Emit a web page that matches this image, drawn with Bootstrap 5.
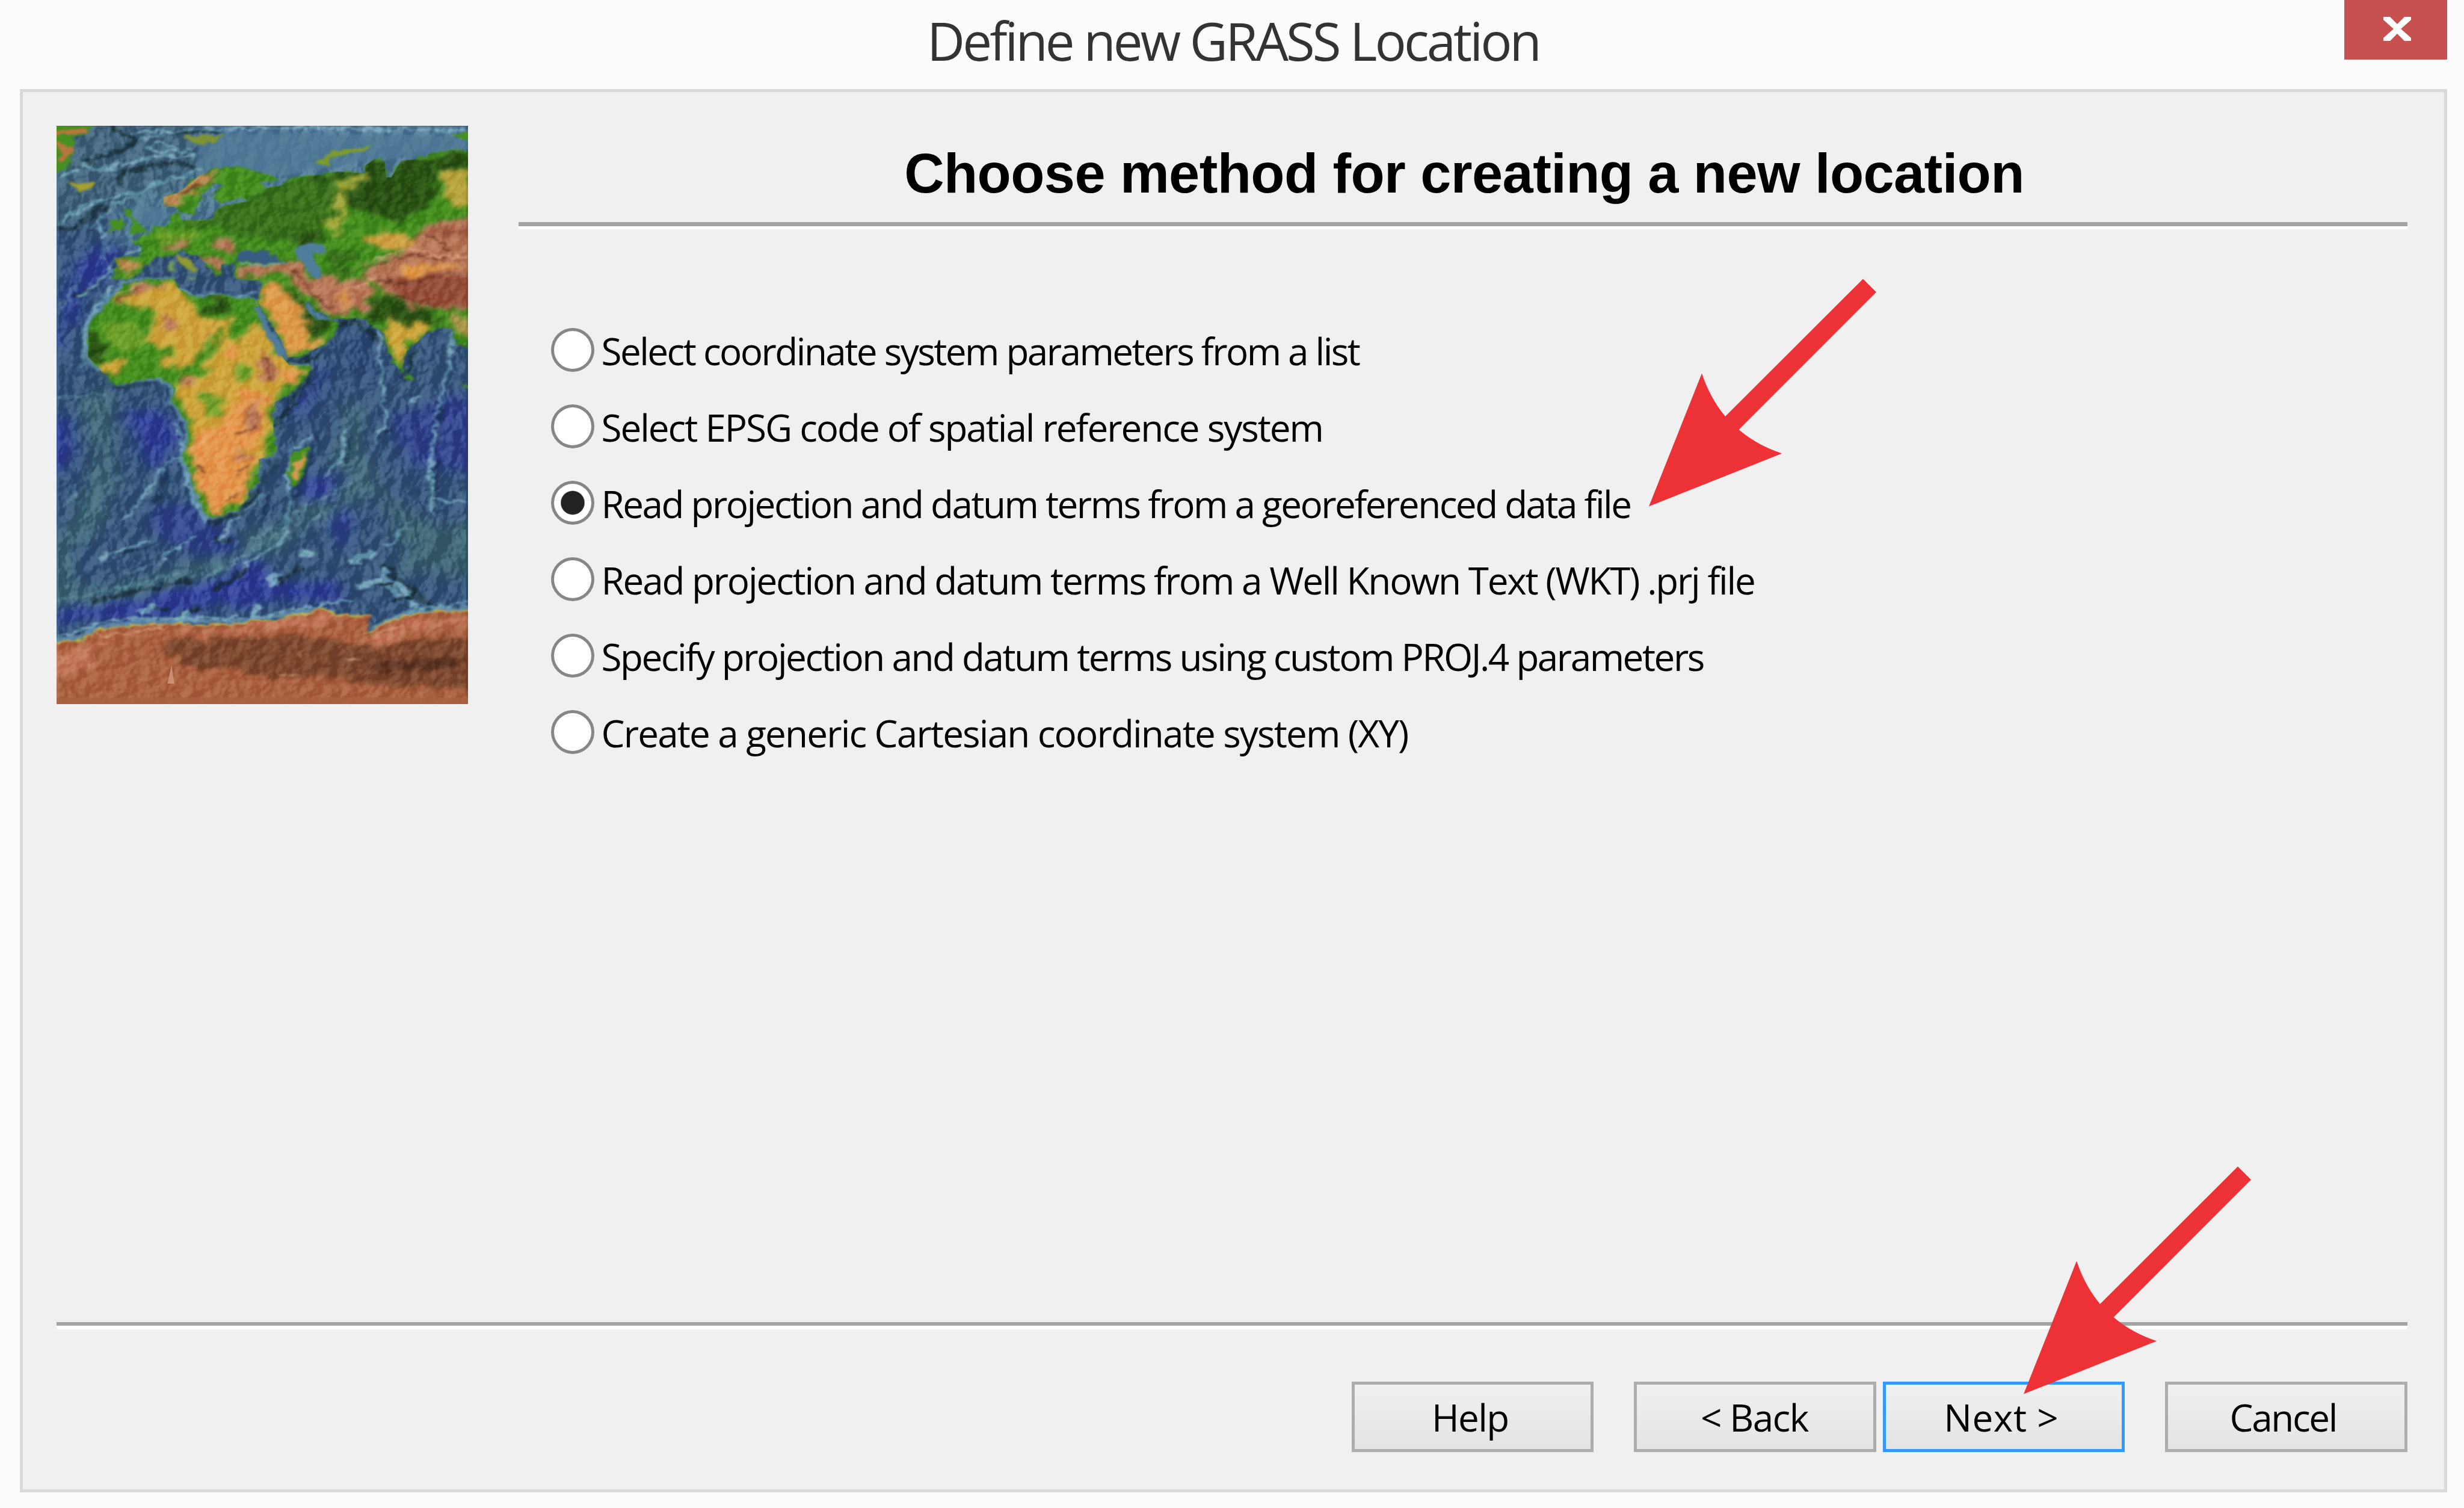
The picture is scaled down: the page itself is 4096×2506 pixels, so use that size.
<!DOCTYPE html>
<html lang="en">
<head>
<meta charset="utf-8">
<title>Define new GRASS Location</title>
<link href="https://cdn.jsdelivr.net/npm/bootstrap@5.3.0/dist/css/bootstrap.min.css" rel="stylesheet">
<style>
body{width:4096px;height:2506px;background:#fcfcfc;overflow:hidden;font-family:"Open Sans","Noto Sans",sans-serif;color:#000}
.titlebar{height:148px}
.win-title{font-size:87px;line-height:134px;letter-spacing:-3.95px;color:#333;padding-left:4px}
.bar-side{width:199px}
.close-btn{width:171px;height:99px;background:#c75050;margin-right:28px}
.close-btn svg{width:46px;height:40px;margin-left:4px;margin-top:-4px}
.panel{height:2331.5px;margin:0 28px 0 33px;border:5.6px solid #d9d9d9;background:#f0f0f0;padding:56px 61.5px 62px 55.5px}
.relief{width:684px;height:961px;display:block}
.relief filter{color-interpolation-filters:sRGB}
.method{width:3140px}
.method h1{font:bold 92px/159.5px "Liberation Sans",Arial,sans-serif;letter-spacing:-.6px;margin:0;padding-left:5px}
.etched{height:12px;background:linear-gradient(#a3a3a3 0 6.5px,#fff 6.5px)}
.options{margin-top:137.5px;padding-left:54px}
.option{height:127px;gap:12px;font-size:62px;line-height:127px}
.option span{padding-top:3px}
.option .form-check-input{width:72px;height:73px;border:5px solid #868686;background:#fff;box-shadow:none;margin:0}
.option .form-check-input:checked{background:radial-gradient(circle,#222 0 19px,#fff 20.5px)}
.option:nth-child(1){letter-spacing:-2.54px}
.option:nth-child(2){letter-spacing:-2.04px}
.option:nth-child(3){letter-spacing:-2.52px}
.option:nth-child(4){letter-spacing:-2.21px}
.option:nth-child(5){letter-spacing:-2.48px}
.option:nth-child(6){letter-spacing:-1.84px}
.actions{margin-top:87px}
.wiz{width:402.5px;height:117px;border:5.6px solid #adadad;border-radius:0;padding:1px 8px 0 0;background:linear-gradient(#f0f0f0,#e4e4e4);font-size:62px;line-height:107px;color:#000;letter-spacing:-1.6px}
.wiz-back{letter-spacing:-1.6px;padding-right:2px}
.wiz-default{border-color:#3399ff;letter-spacing:.6px}
.wiz-cancel{letter-spacing:-2.4px;padding-right:10px}
.pointer{position:absolute;width:380px;height:380px;fill:#ed3237}
.pointer-option{left:2740px;top:462px}
.pointer-next{left:3362.5px;top:1937.2px}
</style>
</head>
<body class="d-flex flex-column position-relative">
<header class="titlebar d-flex align-items-start flex-shrink-0">
  <div class="bar-side"></div>
  <div class="win-title flex-fill text-center">Define new GRASS Location</div>
  <div class="close-btn d-flex align-items-center justify-content-center">
    <svg viewBox="0 0 46 40"><path d="M0 0H11L23 12 35 0H46V5L29 20 46 35V40H35L23 28 11 40H0V35L17 20 0 5Z" fill="#fff"/></svg>
  </div>
</header>
<main class="panel d-flex flex-column flex-shrink-0">
  <div class="d-flex justify-content-between">
    <svg class="relief" viewBox="44 65 1488 2965" preserveAspectRatio="none">
      <defs>
        <filter id="rough" x="-5%" y="-5%" width="110%" height="110%"><feTurbulence type="fractalNoise" baseFrequency=".035 .03" numOctaves="3" seed="4" result="n"/><feDisplacementMap in="SourceGraphic" in2="n" scale="34" xChannelSelector="R" yChannelSelector="G"/><feGaussianBlur stdDeviation="4.5"/></filter>
        <filter id="soft" x="-20%" y="-20%" width="140%" height="140%"><feTurbulence type="fractalNoise" baseFrequency=".02" numOctaves="3" seed="9" result="n"/><feDisplacementMap in="SourceGraphic" in2="n" scale="90" xChannelSelector="R" yChannelSelector="G"/><feGaussianBlur stdDeviation="10"/></filter>
        <filter id="haze" x="-30%" y="-30%" width="160%" height="160%"><feTurbulence type="fractalNoise" baseFrequency=".01" numOctaves="4" seed="2" result="n"/><feDisplacementMap in="SourceGraphic" in2="n" scale="130" xChannelSelector="R" yChannelSelector="G"/><feGaussianBlur stdDeviation="28"/></filter>
        <filter id="ridge" x="-20%" y="-20%" width="140%" height="140%"><feTurbulence type="fractalNoise" baseFrequency=".025" numOctaves="3" seed="12" result="n"/><feDisplacementMap in="SourceGraphic" in2="n" scale="50" xChannelSelector="R" yChannelSelector="G"/><feGaussianBlur stdDeviation="5"/></filter>
        <filter id="bumps" x="0" y="0" width="100%" height="100%"><feTurbulence type="fractalNoise" baseFrequency=".016 .009" numOctaves="4" seed="21"/><feColorMatrix values="0 0 0 0 0 0 0 0 0 0 0 0 0 0 0 1 0 0 0 0"/><feGaussianBlur stdDeviation="3"/><feDiffuseLighting surfaceScale="60" diffuseConstant="1" lighting-color="#fff"><feDistantLight azimuth="215" elevation="32"/></feDiffuseLighting></filter>
        <filter id="landbumps" x="0" y="0" width="100%" height="100%"><feTurbulence type="fractalNoise" baseFrequency=".022 .018" numOctaves="3" seed="5"/><feColorMatrix values="0 0 0 0 0 0 0 0 0 0 0 0 0 0 0 1 0 0 0 0"/><feGaussianBlur stdDeviation="3"/><feDiffuseLighting surfaceScale="30" diffuseConstant="1" lighting-color="#fff"><feDistantLight azimuth="215" elevation="32"/></feDiffuseLighting></filter>
        <path id="africa" d="M290 870L390 852 470 850 480 890 500 920 560 950 600 930 640 930 690 955 740 945 770 965 790 1070 830 1180 860 1250 885 1292 965 1290 950 1350 890 1440 835 1480 825 1560 830 1640 840 1720 820 1755 775 1775 777 1890 742 1930 735 1980 690 2040 640 2065 590 2070 565 2000 540 1930 530 1850 502 1780 510 1720 528 1650 515 1590 490 1530 465 1480 475 1410 430 1365 370 1360 320 1385 260 1395 215 1340 180 1280 158 1250 160 1110 170 1060 215 1000 245 950Z"/>
        <path id="eurasia" d="M1540 185L1480 190 1400 205 1350 235 1290 245 1255 330 1235 330 1230 245 1195 235 1160 270 1160 310 1060 300 950 325 890 330 860 370 800 385 780 350 840 340 820 315 740 290 690 275 620 285 560 320 510 380 490 405 430 430 430 480 470 480 500 515 530 525 560 480 570 420 620 360 655 370 615 400 610 440 640 460 720 430 742 452 650 475 620 500 610 545 560 555 510 550 480 510 458 515 460 560 410 580 370 620 315 660 350 690 345 735 258 740 250 850 300 855 345 820 370 770 405 735 440 740 500 705 560 740 600 790 620 845 640 820 640 775 690 765 690 800 690 850 780 855 790 870 770 960 800 1040 850 1150 880 1255 940 1240 1020 1180 1060 1110 1070 1080 1030 1060 980 1060 945 1000 940 960 990 1020 1040 1050 1160 1052 1185 1100 1230 1130 1240 1210 1290 1340 1310 1220 1390 1120 1430 1100 1465 1105 1490 1180 1540 1215Z"/>
        <path id="antarctica" d="M30 2720L140 2705 200 2650 300 2635 420 2620 560 2630 690 2625 770 2605 830 2610 900 2575 960 2570 1000 2540 1050 2575 1180 2580 1160 2675 1230 2620 1320 2580 1400 2560 1540 2555V3040H30Z"/>
        <clipPath id="landclip"><use href="#africa"/><use href="#eurasia"/><use href="#antarctica"/></clipPath>
      </defs>
      <rect x="44" y="65" width="1488" height="2965" fill="#37577d"/>
      <g filter="url(#haze)">
        <path d="M0 30H600L560 300 300 500 0 600Z" fill="#43677f"/>
        <path d="M560 40H1600V400H900L560 560 380 700 230 640 280 470 560 300Z" fill="#517b98"/>
        <g fill="#31409a">
          <path d="M60 900L180 650 300 700 180 900 90 1100 50 1250Z"/><path d="M300 1500L440 1550 480 1700 440 1830 380 1850 310 1700Z"/><path d="M880 1480L1000 1280 1060 1350 950 1550 900 1600Z" fill="#33498b"/><path d="M1260 1550L1500 1450 1600 1500V1900L1440 1850 1280 1750Z" fill="#334590"/>
          <path d="M350 2050L520 1980 700 2200 640 2300 450 2200Z" fill="#334690"/><path d="M60 2560L300 2450 560 2400 760 2280 850 2400 1080 2400 1050 2500 700 2520 400 2580 60 2620Z"/>
          <path d="M930 1900L1050 1850 1120 2130 1080 2250 1000 2100Z"/><path d="M0 1560L100 1560 90 1830 0 1850Z"/>
        </g>
        <path d="M190 1450L220 1800 150 2100 60 2200 60 2500 300 2450 600 2350 850 2150 1150 1920 1100 1700 1130 1500" fill="none" stroke="#426c7a" stroke-width="85"/>
        <path d="M1280 2100H1600V2350H1300ZM1180 1900L1230 1900 1330 2100 1280 2120Z" fill="#3e6574"/>
        <path d="M1080 1100L1180 1120 1220 1380 1100 1350Z" fill="#33507c"/>
      </g>
      <g filter="url(#ridge)" fill="none" stroke-linejoin="round" stroke-linecap="round">
        <g stroke="#1c3440" stroke-width="24" opacity=".75">
          <path d="M250 75L330 140 290 190 180 225 130 280M470 95H620M300 300L420 255 540 270M270 370L280 300M60 590L120 590 200 480 230 500M120 940L200 870M880 1295L990 1240M1060 1090L1120 1060 1220 1180M1310 1360L1340 1220"/>
          <path d="M600 2100L700 2050 770 1940M660 2200L620 2180M850 2410L920 2330M1230 2320L1390 2520M390 2540H440M500 2570L560 2540M180 2500L520 2400M730 2340L620 2440M840 1600L960 1330"/>
        </g>
        <g stroke="#20395a" stroke-width="14" opacity=".6"><path d="M400 1990L455 1820M1440 1520L1418 1750 1418 2000M985 1650L960 1800 920 1900 905 2100 890 2170M1250 1590L1215 1690M800 1970L790 2080M1100 1640L1090 1780M170 910L260 770M270 2260L380 2220M600 2330L560 2400"/></g>
        <g stroke="#7fb3c6" stroke-width="13" opacity=".75">
          <path d="M330 100L600 85 900 75 1530 90M140 270L210 290 400 225 540 220M60 560L210 440 350 400 560 290M70 540L140 470M190 560L210 640M370 180L440 200 520 190M170 590L240 490 420 350M130 940L240 800M250 760L240 840 M340 690L300 730M250 880L150 1080 145 1300M1210 1080L1230 1560M1480 1120L1430 1500M1320 1480L1350 1450M500 910L560 950M690 960L770 910M360 130L430 110M410 150L470 180M60 320L120 300"/>
          <path d="M290 2080L380 1930 440 1800 500 1760M480 1600L520 1900 580 2100M640 2200L680 2080 790 1960M970 1640L890 1750 880 1900 890 2000 870 2180 720 2330M1080 1620L1080 1780 1010 1850M1240 1560L1200 1680M1425 1500L1400 1740 1400 2060M1400 1985L1530 1990M1310 2100L1240 2230M200 2280L380 2190M430 2280L540 2170M60 2680L240 2600 480 2590 760 2590 900 2540 1100 2500M1200 2640L1320 2560 1530 2500"/>
        </g>
        <g stroke="#6a9bab" stroke-width="12" opacity=".5"><path d="M600 2370L740 2250 880 2120M60 2500L260 2440 480 2360M70 2010L150 1920M300 2360L420 2300 460 2240M740 2200L880 2080 1010 1970 1120 1880M560 2400L700 2310M60 1460L220 1440M950 2110L1010 2050M60 1000L130 850M200 740L230 680"/></g>
        <g stroke="#7fb3c6" stroke-width="30" opacity=".8"><path d="M1110 2295L1180 2260M1140 2430L1220 2390M1220 2400L1300 2430 1340 2530M1220 2350L1270 2470M355 2560L390 2525M490 2600L520 2560M815 2415L850 2365M940 2255L950 2265M755 2570L770 2530"/></g>
        <path d="M1200 2430L1260 2420M1280 2500L1330 2480" stroke="#1c3440" stroke-width="14"/>
      </g>
      <rect x="44" y="65" width="1488" height="2965" filter="url(#bumps)" style="mix-blend-mode:soft-light" opacity=".3"/>
      <path filter="url(#rough)" d="M560 110L900 100 1530 120V200L1200 240 850 320 560 280ZM420 490L340 480 330 560 400 590 460 520Z" fill="#517b98" opacity=".7"/>
      <g filter="url(#rough)">
        <g fill="none" stroke="#78abc0" stroke-width="20" opacity=".6"><use href="#africa" x="-8"/><path d="M30 2705L140 2685 200 2630 420 2600 700 2605 960 2550 1050 2555M1180 2640L1320 2560 1540 2535"/></g>
        <path d="M850 1480L965 1330M190 1320L260 1410 380 1385M740 1960L700 2060 620 2090M790 1900L850 1770" fill="none" stroke="#203c50" stroke-width="20" opacity=".6"/>
        <g fill="#45901f"><use href="#africa"/><use href="#eurasia"/>
          <path d="M30 50H190L150 100 100 130 110 180 90 230 80 290 30 310Z"/><path d="M90 365L180 352 182 380 130 400Z" fill="#a5a02e"/><path d="M500 120L660 110 610 150 560 165Z" fill="#7e9334"/>
          <path d="M980 260L1010 220 1060 190 1180 168 1175 190 1080 210 1030 240 1030 270Z" fill="#7f9d2b"/><path d="M1470 100L1550 100V140L1500 130Z"/>
          <path d="M285 485L320 500 320 540 370 605 310 615 320 570Z"/><path d="M240 560L280 540 290 590 235 605Z"/>
          <path d="M470 725L510 735 555 800 545 830 500 780Z" fill="#8f9a33"/><path d="M450 760H465V810H450ZM510 835H540V850Z" fill="#739b58"/>
          <path d="M950 1700L958 1740 940 1830 920 1900 890 1910 882 1850 892 1760Z" fill="#45901f"/><path d="M945 1730L948 1760 930 1830 912 1890 898 1880 898 1800 925 1780Z" fill="#d09a50"/>
          <path d="M1320 1335L1335 1360 1320 1380 1305 1350ZM1500 1385L1550 1400V1430Z"/>
          <path d="M30 100L110 95 150 85M44 140L70 190 90 185 60 240" fill="none" stroke="#b9763e" stroke-width="26"/>
        </g>
        <use href="#antarctica" fill="#c9ba50" y="-8"/><use href="#antarctica" fill="#ad6341"/>
      </g>
      <g clip-path="url(#landclip)">
        <g filter="url(#soft)">
          <g fill="#2b5315"><path d="M1120 300L1200 240 1400 230 1540 190V270L1420 290 1410 420 1380 480 1300 560 1180 520 1080 460 1110 380Z"/><path d="M900 590L990 590 1010 660 930 690 890 670Z"/><path d="M590 940L680 950 670 1010 590 1040Z"/><path d="M150 1100L215 1180 210 1270 160 1280Z"/><path d="M1170 980L1240 920 1400 1030 1450 1080 1380 1100 1230 1060 1190 1090Z"/><path d="M870 880L1000 1030 1030 1110 990 1160 930 1080Z"/><path d="M410 900L460 900 460 960 410 960Z"/><path d="M940 310L1140 300 1130 340 960 350Z"/></g>
          <g fill="#3a731d"><path d="M620 480L880 350 1060 340 1050 560 880 660 700 640 620 580 480 580Z"/><path d="M1030 700L1130 700 1100 820 1030 830Z"/></g>
          <g fill="#d0a63c">
            <path d="M240 940L390 870 480 870 520 960 570 1040 620 1060 690 1050 680 1180 770 1050 860 1250 950 1310 850 1420 810 1500 815 1600 800 1740 740 1850 720 2000 640 2050 590 2050 550 1900 520 1750 540 1650 520 1560 480 1450 490 1350 560 1350 620 1230 640 1080 570 1230 480 1320 430 1290 460 1200 370 1180 380 1080 400 1010 340 1000Z"/>
            <path d="M200 1270L290 1260 270 1350 220 1330Z"/><path d="M790 870L860 880 930 1010 960 1150 1030 1170 880 1250 850 1130 780 970Z" fill="#df9c4b"/>
            <path d="M260 745L350 760 330 840 270 800Z" fill="#c48c51"/><path d="M430 430L560 320 640 285 600 350 510 430 440 470Z" fill="#bd8b54"/>
            <path d="M1430 285H1540V480L1460 460Z" fill="#b9a43e"/><path d="M1050 480L1055 370 1150 305 1165 335 1090 385 1085 450 1080 560 1060 640 1030 580Z" fill="#a3a83c"/>
            <path d="M1150 640L1260 610 1370 640 1350 700 1230 700Z" fill="#cfa144"/><path d="M1240 1010L1280 1090 1390 1080 1350 1170 1310 1180 1285 1310 1240 1180Z"/><path d="M1470 1050L1540 1020V1170L1490 1140Z" fill="#b09b50"/>
          </g>
          <g fill="#e5984d"><path d="M540 1650L640 1600 720 1420 800 1430 790 1640 740 1750 750 1800 720 1980 620 2060 560 1960 525 1760Z"/><path d="M640 1240L690 1150 700 1260ZM850 1340L950 1310 900 1390Z"/></g>
          <g fill="#b9785a"><path d="M690 790L850 765 930 780 960 850 1040 830 1080 860 1190 850 1170 960 1180 1000 1050 1040 970 980 900 850 830 825 700 855Z"/><path d="M1150 810L1210 760 1310 700 1340 620 1430 550 1600 530V1000L1440 1010 1330 990 1260 920 1200 880Z"/><path d="M250 960L330 880 460 865 330 920Z"/><path d="M420 720L430 670 540 650 550 680 450 700ZM550 715L660 760 630 830ZM620 640L670 650 680 700 640 710Z"/><path d="M800 1210L850 1330 820 1400 780 1330ZM430 1040L480 1060 470 1120 420 1100ZM560 1110L590 1120 580 1150ZM740 1500L780 1450 780 1600 720 1650ZM680 1780L740 1720 730 1800ZM480 1370L540 1360 500 1400Z"/></g>
          <g fill="#974f3a"><path d="M1230 850L1400 830 1600 820V980L1420 1010 1290 950Z"/><path d="M1380 590L1600 560V660L1460 640Z" opacity=".6"/></g>
          <g fill="#6fa12b"><path d="M550 1450L640 1430 640 1540 580 1570ZM690 1290L750 1290 740 1370 690 1370ZM210 1090L340 1080 350 1200 240 1220ZM400 620L540 600 540 640 410 680Z"/></g>
          <g fill="#e09c48"><path d="M1270 800L1340 780 1470 760 1530 775 1400 820 1320 860Z"/><path d="M1060 900L1090 880 1120 990 1070 1000Z" opacity=".8"/></g>
          <path d="M440 2700L720 2690 960 2680 1100 2720 1600 2680V2960L1200 2930 1000 2880 840 2900 700 2850 560 2850 420 2760Z" fill="#804a30"/><path d="M1160 2700L1320 2600 1600 2580V2620L1340 2650 1200 2750ZM180 2670L600 2650 1020 2560 1080 2600 900 2640 600 2670ZM20 2780L200 2720 160 2850 20 2900Z" fill="#c4795a"/>
          <path d="M1150 2850L1300 2800 1460 2790 1530 2820 1400 2860 1180 2860Z" fill="#5d3423"/>
        </g>
        <g filter="url(#ridge)" fill="none" stroke-width="9" opacity=".55"><path stroke="#5a2a1c" d="M1190 780L1330 720 1450 750M1200 860L1330 870 1420 830 1530 820M1380 610L1470 700M1280 930L1400 990M900 800L960 920 1040 1000M260 965L340 900M800 1250L820 1360M700 1650L760 1600M690 1860L740 1800M560 1800L580 1860M660 2000L700 1940M560 360L500 420"/><path stroke="#f2c09a" d="M1180 760L1320 690 1430 730 1530 740M1110 900L1200 850M250 930L350 870M540 1720L600 1650M1190 2690L1300 2620M700 1780L740 1760M200 2680L420 2640M1100 2800H1150M850 2880H920M930 2760V2790"/></g>
      </g>
      <rect x="44" y="65" width="1488" height="2965" clip-path="url(#landclip)" filter="url(#landbumps)" style="mix-blend-mode:soft-light" opacity=".25"/>
      <g filter="url(#rough)" fill="#517d9c">
        <path d="M910 700L960 665 1010 675 1010 715 970 715 975 760 1000 800 1005 850 960 845 945 790 915 750Z"/>
        <path d="M700 765L700 730 730 700 760 720 800 705 850 745 870 765 800 772 740 760Z" fill="#365c80"/><path d="M710 770L800 780 870 770" stroke="#7fb3c6" stroke-width="8" fill="none"/>
        <path d="M755 985L775 990 820 1110 870 1210 875 1265 845 1240 800 1130Z"/><path d="M945 970L1000 1035 1040 1060 990 1060 950 1010Z"/>
      </g>
      <rect x="44" y="2995" width="1488" height="35" fill="#aa6241" opacity=".8"/>
      <path d="M445 2925L460 2830 470 2925Z" fill="#d79c82" opacity=".8"/>
    </svg>
    <section class="method">
      <h1 class="text-center">Choose method for creating a new location</h1>
      <div class="etched"></div>
      <div class="options">
        <label class="option d-flex align-items-center"><input class="form-check-input" type="radio" name="method"><span>Select coordinate system parameters from a list</span></label>
        <label class="option d-flex align-items-center"><input class="form-check-input" type="radio" name="method"><span>Select EPSG code of spatial reference system</span></label>
        <label class="option d-flex align-items-center"><input class="form-check-input" type="radio" name="method" checked><span>Read projection and datum terms from a georeferenced data file</span></label>
        <label class="option d-flex align-items-center"><input class="form-check-input" type="radio" name="method"><span>Read projection and datum terms from a Well Known Text (WKT) .prj file</span></label>
        <label class="option d-flex align-items-center"><input class="form-check-input" type="radio" name="method"><span>Specify projection and datum terms using custom PROJ.4 parameters</span></label>
        <label class="option d-flex align-items-center"><input class="form-check-input" type="radio" name="method"><span>Create a generic Cartesian coordinate system (XY)</span></label>
      </div>
    </section>
  </div>
  <div class="mt-auto">
    <div class="etched"></div>
    <div class="actions d-flex justify-content-end">
      <button type="button" class="btn wiz" style="margin-right:67px">Help</button>
      <button type="button" class="btn wiz wiz-back" style="margin-right:11px">&lt; Back</button>
      <button type="button" class="btn wiz wiz-default" style="margin-right:67px">Next &gt;</button>
      <button type="button" class="btn wiz wiz-cancel">Cancel</button>
    </div>
  </div>
</main>
<svg class="pointer pointer-option" viewBox="0 0 380 380"><path id="arrow" d="M1 379.6L89 158.5Q103 200 128 230L357 1.5 379 23.5 150.6 252Q181 278 222.3 291.5Z"/></svg>
<svg class="pointer pointer-next" viewBox="0 0 380 380"><use href="#arrow"/></svg>
<script src="https://cdn.jsdelivr.net/npm/bootstrap@5.3.0/dist/js/bootstrap.bundle.min.js"></script>
</body>
</html>
